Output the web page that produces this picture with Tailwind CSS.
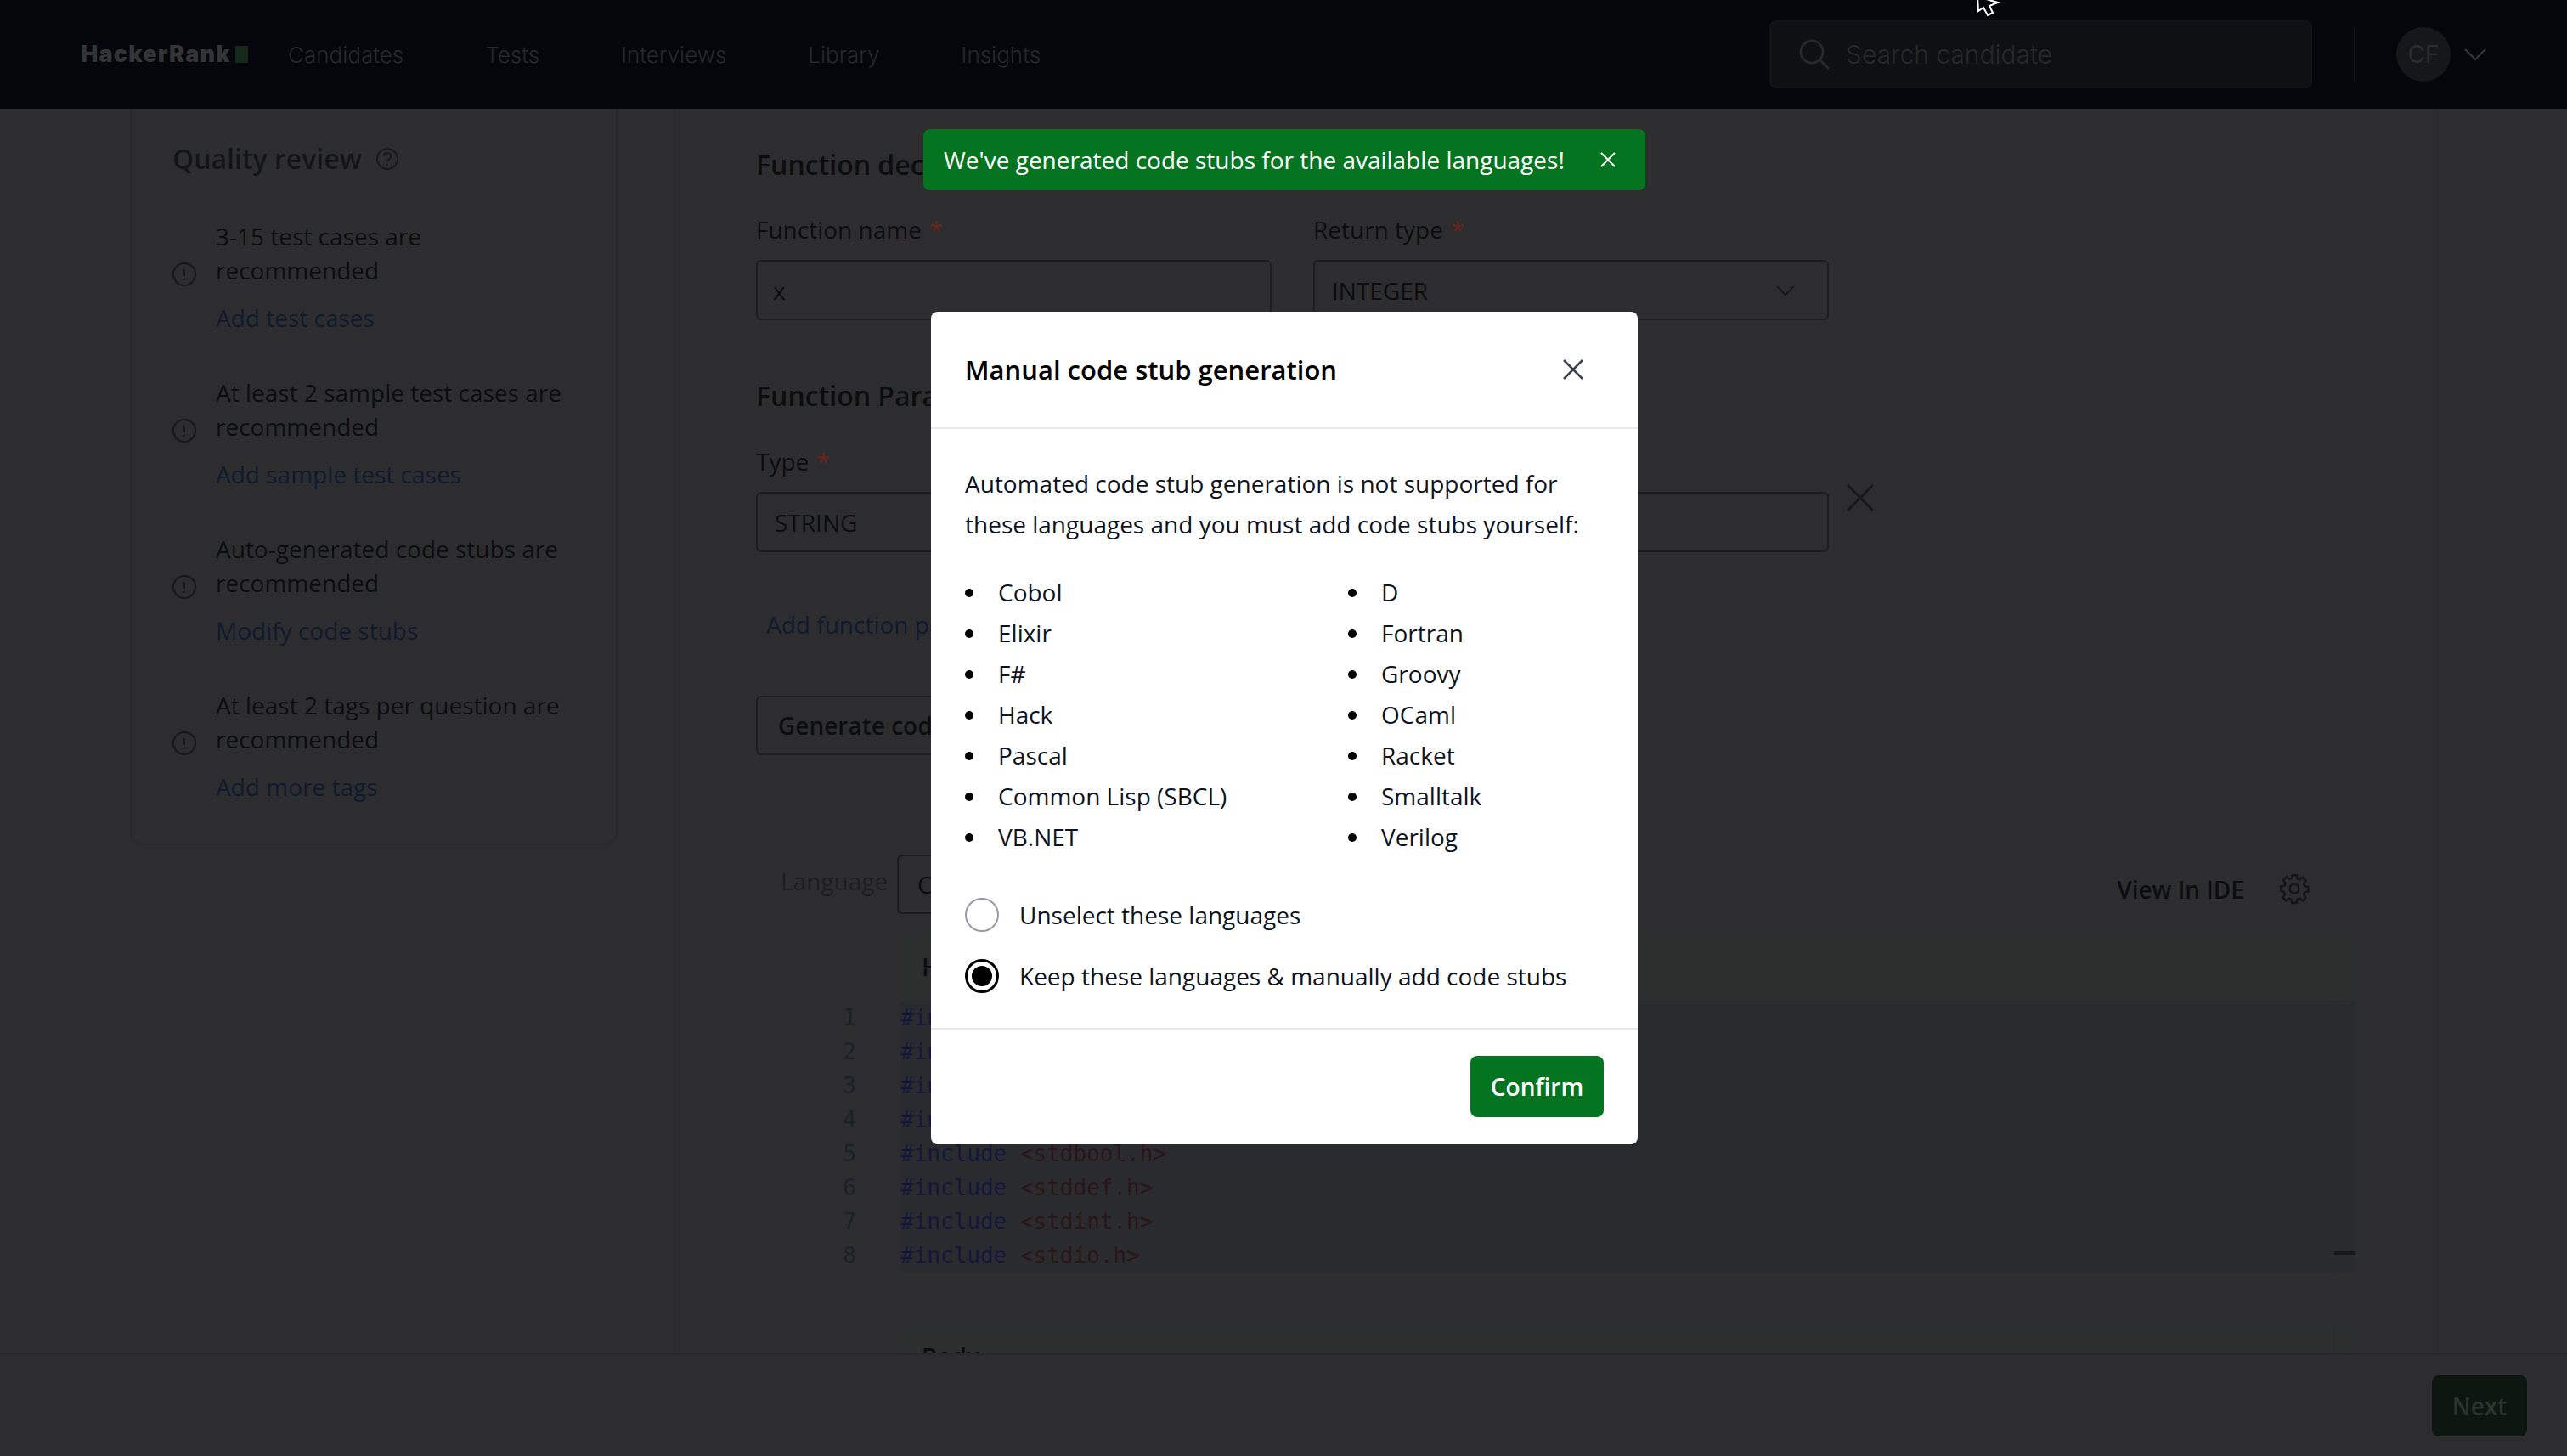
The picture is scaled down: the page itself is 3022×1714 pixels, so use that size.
<!DOCTYPE html>
<html lang="en">
<head>
  <meta charset="UTF-8" />
  <title>HackerRank - Manual code stub generation</title>
  <script src="https://cdn.jsdelivr.net/npm/@tailwindcss/browser@4"></script>
</head>
<body class="bg-[#2d2d2f] font-['Open_Sans',sans-serif] text-[28px] text-[#0c0d0f]">
<div class="relative w-[3022px] h-[1714px] overflow-hidden flex flex-col">

  <!-- top nav -->
  <header class="h-[128px] shrink-0 bg-[#04060c] flex items-center font-['Inter',sans-serif] text-[#26282c]">
    <div class="w-[339px] pl-[95px] flex items-center gap-[3px]">
      <span class="w-[179px] font-black text-[27px] tracking-[1.200px] leading-[28px] text-[#333436] whitespace-nowrap">HackerRank</span>
      <span class="w-[15px] h-[20px] bg-[#14291a]"></span>
    </div>
    <nav class="flex gap-[96px] font-light text-[26px]">
      <span>Candidates</span><span>Tests</span><span>Interviews</span><span>Library</span><span>Insights</span>
    </nav>
    <div class="ml-auto w-[639px] h-[80px] mr-[49px] rounded-lg border-2 border-[#111316] bg-[#0e1013] flex items-center pl-[32px] gap-[18px] text-[30px] text-[#26282b] font-light">
      <svg class="w-[38px] h-[38px]" viewBox="0 0 38 38" fill="none" stroke="#26282b" stroke-width="3"><circle cx="16" cy="16" r="13"/><path d="M26 26l10 10"/></svg>
      <span>Search candidate</span>
    </div>
    <div class="w-[2px] h-[64px] bg-[#14161a]"></div>
    <div class="ml-[48px] w-[64px] h-[64px] rounded-full bg-[#14181a] flex items-center justify-center text-[#2a2d30] text-[28px]">CF</div>
    <svg class="ml-[16px] mr-[95px] w-[26px] h-[16px]" viewBox="0 0 26 16" fill="none" stroke="#33363a" stroke-width="2"><path d="M1 2l12 12L25 2"/></svg>
  </header>

  <div class="flex-1 flex min-h-0">
    <!-- quality review -->
    <aside class="w-[794px] shrink-0 pl-[153px]">
      <div class="w-[574px] h-[867px] border-x-2 border-b-2 border-[#2a2a2c] rounded-b-2xl pl-[48px] pt-[37px]">
        <h3 class="flex items-center gap-[16px] font-semibold text-[32px] leading-[44px] text-[#131416]">Quality review
          <svg class="w-[28px] h-[28px]" viewBox="0 0 28 28" fill="none" stroke="#17181a" stroke-width="2"><circle cx="14" cy="14" r="12"/><path d="M10 11a4 4 0 1 1 6 3.400c-1.400.8-2 1.600-2 3M14 20v2"/></svg>
        </h3>
        <div class="mt-[49px] flex flex-col gap-[48px] w-[480px] leading-[40px]">
          <div class="flex items-center gap-[23px]">
            <svg class="w-[28px] h-[28px] shrink-0 mt-[-6px]" viewBox="0 0 28 28" fill="none" stroke="#17181a" stroke-width="2"><circle cx="14" cy="14" r="13"/><path d="M14 8v8M14 19v2"/></svg>
            <div><p>3-15 test cases are recommended</p><a class="block mt-[16px] text-[#101a2e]">Add test cases</a></div>
          </div>
          <div class="flex items-center gap-[23px]">
            <svg class="w-[28px] h-[28px] shrink-0 mt-[-6px]" viewBox="0 0 28 28" fill="none" stroke="#17181a" stroke-width="2"><circle cx="14" cy="14" r="13"/><path d="M14 8v8M14 19v2"/></svg>
            <div><p>At least 2 sample test cases are recommended</p><a class="block mt-[16px] text-[#101a2e]">Add sample test cases</a></div>
          </div>
          <div class="flex items-center gap-[23px]">
            <svg class="w-[28px] h-[28px] shrink-0 mt-[-6px]" viewBox="0 0 28 28" fill="none" stroke="#17181a" stroke-width="2"><circle cx="14" cy="14" r="13"/><path d="M14 8v8M14 19v2"/></svg>
            <div><p>Auto-generated code stubs are recommended</p><a class="block mt-[16px] text-[#101a2e]">Modify code stubs</a></div>
          </div>
          <div class="flex items-center gap-[23px]">
            <svg class="w-[28px] h-[28px] shrink-0 mt-[-6px]" viewBox="0 0 28 28" fill="none" stroke="#17181a" stroke-width="2"><circle cx="14" cy="14" r="13"/><path d="M14 8v8M14 19v2"/></svg>
            <div><p>At least 2 tags per question are recommended</p><a class="block mt-[16px] text-[#101a2e]">Add more tags</a></div>
          </div>
        </div>
      </div>
    </aside>

    <!-- question form -->
    <main class="w-[2076px] shrink-0 border-x-2 border-[#2a2a2c] pl-[94px] pt-[44px] relative overflow-hidden">
      <h3 class="font-semibold text-[32px] leading-[44px]">Function declaration</h3>
      <div class="mt-[34px] flex gap-[49px] w-[1263px]">
        <div class="w-[607px]">
          <label class="block leading-[40px]">Function name <span class="text-[#6b241a] ml-[2px]">*</span></label>
          <div class="mt-[16px] h-[71px] border-2 border-[#1c1d1f] rounded-md pl-[18px] flex items-center">x</div>
        </div>
        <div class="w-[607px]">
          <label class="block leading-[40px]">Return type <span class="text-[#6b241a] ml-[2px]">*</span></label>
          <div class="mt-[16px] h-[71px] border-2 border-[#1c1d1f] rounded-md pl-[20px] pr-[38px] flex items-center justify-between">INTEGER
            <svg class="w-[22px] h-[14px]" viewBox="0 0 22 14" fill="none" stroke="#17181a" stroke-width="2"><path d="M1 2l10 10L21 2"/></svg>
          </div>
        </div>
      </div>
      <h3 class="mt-[67px] font-semibold text-[32px] leading-[44px]">Function Parameters</h3>
      <div class="mt-[35px] flex gap-[49px] w-[1263px] relative">
        <div class="w-[607px]">
          <label class="block leading-[40px]">Type <span class="text-[#6b241a] ml-[2px]">*</span></label>
          <div class="mt-[16px] h-[71px] border-2 border-[#1c1d1f] rounded-md pl-[20px] flex items-center">STRING</div>
        </div>
        <div class="w-[607px]">
          <label class="block leading-[40px]">Name <span class="text-[#6b241a] ml-[2px]">*</span></label>
          <div class="mt-[16px] h-[71px] border-2 border-[#1c1d1f] rounded-md"></div>
        </div>
        <svg class="absolute left-[1284px] top-[47px] w-[32px] h-[32px]" viewBox="0 0 32 32" fill="none" stroke="#17181a" stroke-width="3"><path d="M1 1l30 30M31 1L1 31"/></svg>
      </div>
      <a class="block mt-[65px] ml-[12px] leading-[40px] text-[#101a2e]">Add function parameter</a>
      <div class="mt-[64px] w-[400px] h-[70px] border-2 border-[#1c1d1f] rounded-md pl-[24px] flex items-center font-semibold">Generate code stubs</div>

      <div class="mt-[117px] ml-[29px] w-[1801px] flex items-center h-[70px]">
        <span class="w-[137px] mb-[8px] text-[#1d1e20]">Language</span>
        <div class="w-[300px] h-[70px] border-2 border-[#1c1d1f] rounded-md pl-[22px] flex items-center">C</div>
        <span class="ml-auto mt-[12px] font-semibold">View In IDE</span>
        <svg class="ml-[40px] mt-[10px] w-[38px] h-[38px]" viewBox="0 0 24 24" fill="none" stroke="#141517" stroke-width="1.600"><circle cx="12" cy="12" r="3.400"/><path d="M10.300 2h3.400l.5 2.700 1.700.7 2.300-1.600 2.400 2.400-1.600 2.300.7 1.700 2.700.5v3.400l-2.700.5-.7 1.700 1.600 2.300-2.400 2.400-2.300-1.600-1.700.7-.5 2.700h-3.400l-.5-2.700-1.700-.7-2.300 1.600-2.400-2.400 1.600-2.300-.7-1.700L2 13.700v-3.400l2.700-.5.7-1.700-1.600-2.300 2.400-2.400 2.300 1.600 1.700-.7z"/></svg>
      </div>

      <!-- code editor -->
      <div class="mt-[22px] ml-[170px] w-[1713px]">
        <div class="h-[80px] bg-[#2b2f2e] pl-[25px] flex items-center font-semibold">Head</div>
        <div class="relative h-[319px] bg-[#2a2b2e] font-['DejaVu_Sans_Mono',monospace] text-[26px] leading-[40px]">
          <div class="absolute left-[-75px] top-0 w-[30px] text-[#182228] text-center">
            <div>1</div><div>2</div><div>3</div><div>4</div><div>5</div><div>6</div><div>7</div><div>8</div>
          </div>
          <div class="text-[#14173a]">
            <div>#include <span class="text-[#2a1518]">&lt;assert.h&gt;</span></div>
            <div>#include <span class="text-[#2a1518]">&lt;ctype.h&gt;</span></div>
            <div>#include <span class="text-[#2a1518]">&lt;limits.h&gt;</span></div>
            <div>#include <span class="text-[#2a1518]">&lt;math.h&gt;</span></div>
            <div>#include <span class="text-[#2a1518]">&lt;stdbool.h&gt;</span></div>
            <div>#include <span class="text-[#2a1518]">&lt;stddef.h&gt;</span></div>
            <div>#include <span class="text-[#2a1518]">&lt;stdint.h&gt;</span></div>
            <div>#include <span class="text-[#2a1518]">&lt;stdio.h&gt;</span></div>
          </div>
          <div class="absolute right-0 top-0 bottom-0 w-[27px] border-l-2 border-[#292a2c]"><div class="absolute top-[295px] w-full h-[4px] bg-[#17181a]"></div></div>
        </div>
        <div class="relative mt-[61px] h-[60px] bg-[#2b2f2e] pl-[25px] pt-[18px] font-semibold">Body
          <div class="absolute right-0 top-0 bottom-0 w-[27px] border-l-2 border-[#292a2c]"></div>
        </div>
      </div>
    </main>
  </div>

  <!-- bottom action bar -->
  <footer class="absolute left-0 right-0 bottom-0 h-[121px] bg-[#2d2d2f] border-t-2 border-[#28282a] flex items-center justify-end pr-[47px]">
    <button class="w-[112px] h-[72px] rounded-lg bg-[#0d170f] text-[#2d332e] font-semibold">Next</button>
  </footer>

  <!-- cursor -->
  <svg class="absolute left-[2320px] top-[-10px] w-[36px] h-[32px] z-30" viewBox="0 0 36 32"><path d="M8 6l1 17 6-4 5 9 6-3-4-8 10-4z" fill="#04060c" stroke="#fff" stroke-width="2"/></svg>

  <!-- toast -->
  <div class="absolute z-20 left-[1087px] top-[152px] w-[850px] h-[72px] rounded-lg bg-[#057420] text-white flex items-center pl-[24px]">
    <span>We've generated code stubs for the available languages!</span>
    <svg class="ml-auto mr-[35px] w-[18px] h-[18px]" viewBox="0 0 18 18" fill="none" stroke="#fff" stroke-width="2"><path d="M1 1l16 16M17 1L1 17"/></svg>
  </div>

  <!-- modal -->
  <div class="absolute z-10 left-[1096px] top-[367px] w-[832px] h-[980px] bg-white rounded-lg text-[#0e141e] flex flex-col">
    <div class="h-[138px] shrink-0 border-b-2 border-[#e7e8ea] flex items-center justify-between pl-[40px] pr-[64px]">
      <h2 class="font-semibold text-[31px] text-black">Manual code stub generation</h2>
      <svg class="w-[24px] h-[24px]" viewBox="0 0 24 24" fill="none" stroke="#39424e" stroke-width="2.500"><path d="M1 1l22 22M23 1L1 23"/></svg>
    </div>
    <div class="flex-1 pl-[40px] pr-[40px] pt-[40px]">
      <p class="leading-[48px]">Automated code stub generation is not supported for these languages and you must add code stubs yourself:</p>
      <div class="mt-[32px] grid grid-cols-[451px_1fr] leading-[48px]">
        <ul class="pl-[39px] [&>li]:relative [&>li]:before:absolute [&>li]:before:left-[-39px] [&>li]:before:top-[20px] [&>li]:before:w-[10px] [&>li]:before:h-[10px] [&>li]:before:rounded-full [&>li]:before:bg-black [&>li]:before:content-['']">
          <li>Cobol</li><li>Elixir</li><li>F#</li><li>Hack</li><li>Pascal</li><li>Common Lisp (SBCL)</li><li>VB.NET</li>
        </ul>
        <ul class="pl-[39px] [&>li]:relative [&>li]:before:absolute [&>li]:before:left-[-39px] [&>li]:before:top-[20px] [&>li]:before:w-[10px] [&>li]:before:h-[10px] [&>li]:before:rounded-full [&>li]:before:bg-black [&>li]:before:content-['']">
          <li>D</li><li>Fortran</li><li>Groovy</li><li>OCaml</li><li>Racket</li><li>Smalltalk</li><li>Verilog</li>
        </ul>
      </div>
      <div class="mt-[48px] flex flex-col gap-[32px]">
        <label class="flex items-center gap-[24px] h-[40px]"><span class="w-[40px] h-[40px] rounded-full border-2 border-[#9a9aa5]"></span>Unselect these languages</label>
        <label class="flex items-center gap-[24px] h-[40px]"><span class="w-[40px] h-[40px] rounded-full border-[3px] border-black flex items-center justify-center"><span class="w-[24px] h-[24px] rounded-full bg-black"></span></span>Keep these languages &amp; manually add code stubs</label>
      </div>
    </div>
    <div class="h-[137px] shrink-0 border-t-2 border-[#e7e8ea] flex items-start justify-end pt-[31px] pr-[40px]">
      <button class="w-[157px] h-[72px] rounded-lg bg-[#057420] text-white font-semibold">Confirm</button>
    </div>
  </div>
</div>
</body>
</html>
